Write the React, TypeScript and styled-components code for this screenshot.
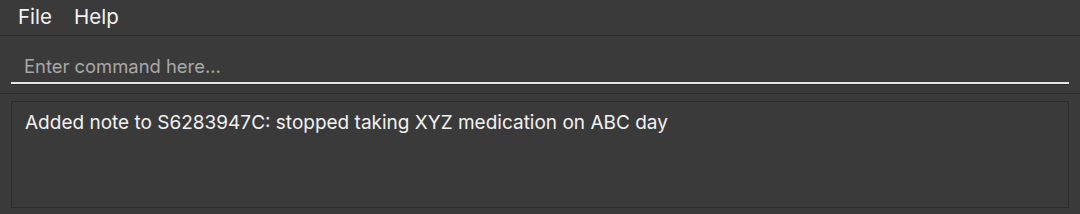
import styled, { createGlobalStyle } from "styled-components";

const GlobalStyle = createGlobalStyle`
  html, body {
    margin: 0;
    padding: 0;
    background: #3a3a3a;
    font-family: Inter, "Noto Sans", sans-serif;
  }
`;

const Window = styled.div`
  display: flex;
  flex-direction: column;
  width: 1080px;
  height: 214px;
  background: #3a3a3a;
`;

const MenuBar = styled.div`
  display: flex;
  align-items: center;
  gap: 22px;
  height: 35px;
  padding: 0 0 0 18px;
  border-bottom: 1px solid #2c2c2c;
`;

const MenuItem = styled.div`
  font-size: 20.5px;
  color: #f2f2f2;
  line-height: 1;
`;

const CommandSection = styled.div`
  height: 57px;
  padding: 0 11px;
  border-bottom: 1px solid #2c2c2c;
  display: flex;
  align-items: flex-start;
`;

const CommandInput = styled.input`
  width: 100%;
  margin-top: 13px;
  height: 35px;
  box-sizing: border-box;
  background: transparent;
  border: none;
  border-bottom: 2px solid #e6e6e6;
  box-shadow: 0 1px 0 #2a2a2a;
  outline: none;
  padding: 0 0 0 13px;
  font-family: inherit;
  font-size: 18.4px;
  color: #f2f2f2;
  &::placeholder {
    color: #a8a8a8;
  }
`;

const ResultSection = styled.div`
  flex: 1;
  padding: 7px 11px 6px 11px;
  display: flex;
`;

const ResultBox = styled.div`
  flex: 1;
  border: 1px solid #2b2b2b;
  padding: 9px 13px;
  font-size: 19px;
  color: #f2f2f2;
  line-height: 1.3;
`;

export default function App() {
  return (
    <>
      <GlobalStyle />
      <Window>
        <MenuBar>
          <MenuItem>File</MenuItem>
          <MenuItem>Help</MenuItem>
        </MenuBar>
        <CommandSection>
          <CommandInput placeholder="Enter command here..." />
        </CommandSection>
        <ResultSection>
          <ResultBox>
            Added note to S6283947C: stopped taking XYZ medication on ABC day
          </ResultBox>
        </ResultSection>
      </Window>
    </>
  );
}
